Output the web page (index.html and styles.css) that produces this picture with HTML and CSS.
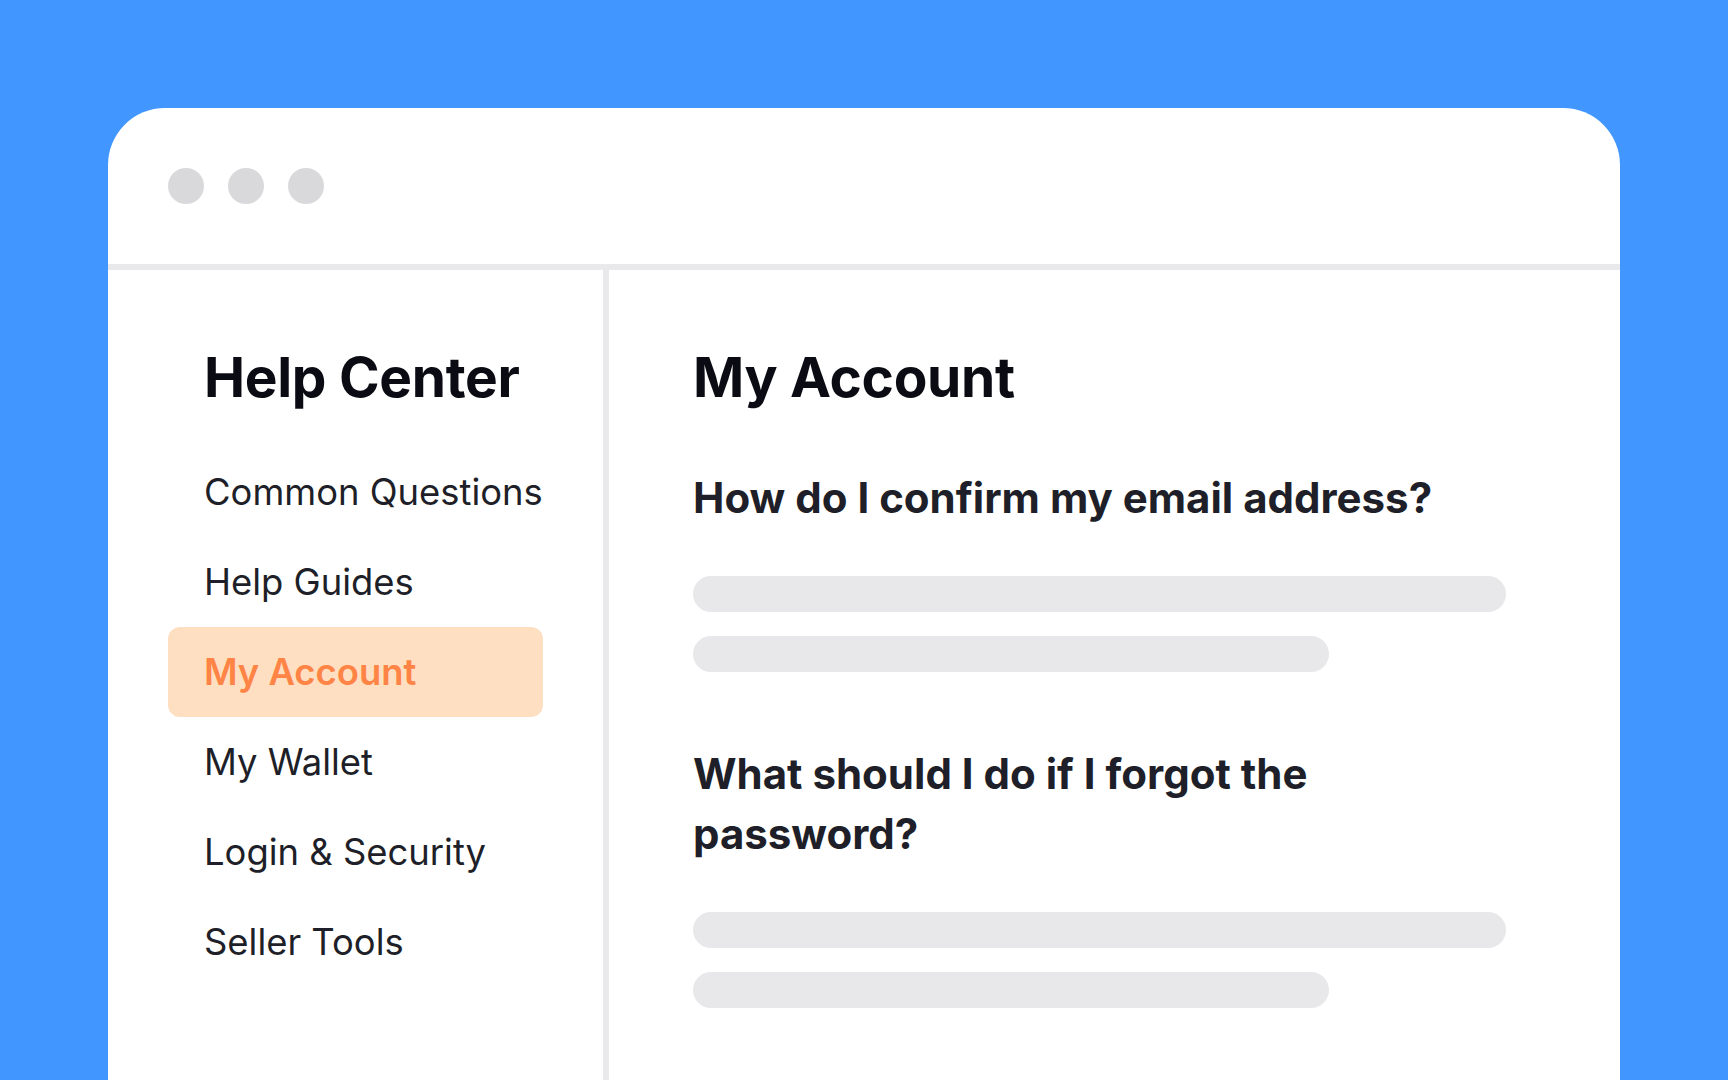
FILE: index.html
```html
<!DOCTYPE html>
<html lang="en">
<head>
<meta charset="utf-8">
<title>Help Center</title>
<link rel="stylesheet" href="styles.css">
</head>
<body>
  <div class="window">
    <div class="titlebar">
      <span class="dot"></span>
      <span class="dot"></span>
      <span class="dot"></span>
    </div>
    <div class="content">
      <aside class="sidebar">
        <h1 class="side-title">Help Center</h1>
        <ul class="nav">
          <li class="nav-item">Common Questions</li>
          <li class="nav-item">Help Guides</li>
          <li class="nav-item active">My Account</li>
          <li class="nav-item">My Wallet</li>
          <li class="nav-item">Login &amp; Security</li>
          <li class="nav-item">Seller Tools</li>
        </ul>
      </aside>
      <main class="main">
        <h1 class="page-title">My Account</h1>
        <section class="faq">
          <h2 class="question">How do I confirm my email address?</h2>
          <div class="bar"></div>
          <div class="bar short"></div>
        </section>
        <section class="faq">
          <h2 class="question">What should I do if I forgot the password?</h2>
          <div class="bar"></div>
          <div class="bar short"></div>
        </section>
      </main>
    </div>
  </div>
</body>
</html>
```
FILE: styles.css
```css
html, body {
  margin: 0;
  padding: 0;
}

body {
  background: #4197ff;
  font-family: Inter, "Noto Sans", "Liberation Sans", sans-serif;
  height: 1080px;
  overflow: hidden;
  color: #1e1f28;
}

.window {
  margin: 108px 108px 0;
  height: 1100px;
  background: #ffffff;
  border-radius: 57px 57px 0 0;
  display: flex;
  flex-direction: column;
}

.titlebar {
  height: 156px;
  flex: none;
  border-bottom: 6px solid #e9e9eb;
  display: flex;
  align-items: center;
  gap: 24px;
  padding-left: 60px;
}

.dot {
  width: 36px;
  height: 36px;
  border-radius: 50%;
  background: #d9d9db;
}

.content {
  display: flex;
  flex: 1;
}

.sidebar {
  width: 501px;
  flex: none;
  box-sizing: border-box;
  border-right: 6px solid #e9e9eb;
  padding: 73px 0 0 60px;
}

.side-title,
.page-title {
  margin: 0;
  font-size: 55px;
  font-weight: 700;
  line-height: 68px;
  color: #0b0b14;
  letter-spacing: -0.3px;
}

.side-title {
  padding-left: 36px;
  margin-bottom: 36px;
}

.nav {
  list-style: none;
  margin: 0;
  padding: 0;
  width: 375px;
}

.nav-item {
  height: 90px;
  line-height: 90px;
  padding-left: 36px;
  font-size: 36.4px;
  font-weight: 400;
  color: #1e1f28;
  border-radius: 12px;
  white-space: nowrap;
}

.nav-item.active {
  background: #fedfc2;
  color: #ff8445;
  font-weight: 600;
}

.main {
  flex: 1;
  padding: 73px 114px 0 84px;
}

.page-title {
  margin-bottom: 57px;
}

.faq + .faq {
  margin-top: 72px;
}

.question {
  margin: 0 0 48px;
  font-size: 42px;
  font-weight: 700;
  line-height: 60px;
  color: #1e1f28;
}

.bar {
  height: 36px;
  border-radius: 18px;
  background: #e8e8ea;
}

.bar + .bar {
  margin-top: 24px;
}

.bar.short {
  width: 636px;
}
```
